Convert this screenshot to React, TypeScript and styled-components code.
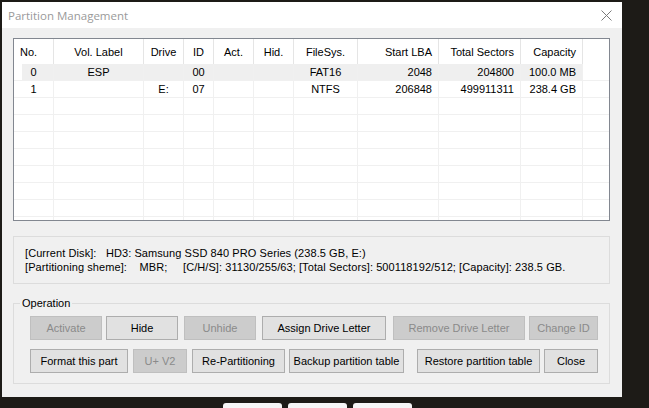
import { createGlobalStyle, styled } from "styled-components"

const GlobalStyle = createGlobalStyle`
  html, body {
    margin: 0;
    padding: 0;
    background: #1d1b17;
    overflow: hidden;
  }
  body {
    font-family: "Liberation Sans", Arial, sans-serif;
    font-size: 11px;
    color: #000;
  }
`

interface Column {
  title: string
  width: number
  head: "left" | "center" | "right"
  body: "left" | "center" | "right"
}

const columns: Column[] = [
  { title: "No.", width: 40, head: "left", body: "center" },
  { title: "Vol. Label", width: 90, head: "center", body: "center" },
  { title: "Drive", width: 40, head: "center", body: "center" },
  { title: "ID", width: 30, head: "center", body: "center" },
  { title: "Act.", width: 40, head: "center", body: "center" },
  { title: "Hid.", width: 40, head: "center", body: "center" },
  { title: "FileSys.", width: 64, head: "center", body: "center" },
  { title: "Start LBA", width: 81, head: "right", body: "right" },
  { title: "Total Sectors", width: 82, head: "right", body: "right" },
  { title: "Capacity", width: 62, head: "right", body: "right" },
]

const partitions = [
  ["0", "ESP", "", "00", "", "", "FAT16", "2048", "204800", "100.0 MB"],
  ["1", "", "E:", "07", "", "", "NTFS", "206848", "499911311", "238.4 GB"],
]

const gridTemplate = columns.map(c => `${c.width}px`).join(" ") + " 1fr"

interface ButtonDef {
  label: string
  w: number
  ml: number
  disabled?: boolean
}

const rowOne: ButtonDef[] = [
  { label: "Activate", w: 72, ml: 0, disabled: true },
  { label: "Hide", w: 72, ml: 4 },
  { label: "Unhide", w: 72, ml: 6, disabled: true },
  { label: "Assign Drive Letter", w: 124, ml: 6 },
  { label: "Remove Drive Letter", w: 132, ml: 7, disabled: true },
  { label: "Change ID", w: 69, ml: 4, disabled: true },
]

const rowTwo: ButtonDef[] = [
  { label: "Format this part", w: 98, ml: 0 },
  { label: "U+ V2", w: 54, ml: 5, disabled: true },
  { label: "Re-Partitioning", w: 93, ml: 5 },
  { label: "Backup partition table", w: 115, ml: 4 },
  { label: "Restore partition table", w: 123, ml: 13 },
  { label: "Close", w: 54, ml: 4 },
]

export default function App() {
  const emptyRows = Array.from({ length: 8 })

  return (
    <>
      <GlobalStyle />
      <Desktop>
        <Window>
          <TitleBar>
            <Title>Partition Management</Title>
            <CloseIcon width="11" height="11" viewBox="0 0 11 11">
              <path d="M0.5 0.5 L10.5 10.5 M10.5 0.5 L0.5 10.5" stroke="#7a7a7a" strokeWidth="1" fill="none" />
            </CloseIcon>
          </TitleBar>

          <Content>
            <ListBox>
              <HeaderRow>
                {columns.map(c => (
                  <HeaderCell key={c.title} $align={c.head}>{c.title}</HeaderCell>
                ))}
                <HeaderCell $align="left" $last />
              </HeaderRow>

              {partitions.map((p, i) => (
                <Row key={i} $selected={i === 0}>
                  {p.map((value, j) => (
                    <Cell key={j} $align={columns[j].body}>{value}</Cell>
                  ))}
                  <Cell $align="left" $last />
                </Row>
              ))}

              {emptyRows.map((_, i) => (
                <Row key={`e${i}`}>
                  {columns.map(c => <Cell key={c.title} $align="left" />)}
                  <Cell $align="left" $last />
                </Row>
              ))}
            </ListBox>

            <InfoBox>
              <InfoLine>[Current Disk]:   HD3: Samsung SSD 840 PRO Series (238.5 GB, E:)</InfoLine>
              <InfoLine>[Partitioning sheme]:    MBR;     [C/H/S]: 31130/255/63; [Total Sectors]: 500118192/512; [Capacity]: 238.5 GB.</InfoLine>
            </InfoBox>

            <OperationGroup>
              <Legend>Operation</Legend>
              <ButtonRow>
                {rowOne.map(b => (
                  <Button key={b.label} $w={b.w} $ml={b.ml} disabled={b.disabled}>{b.label}</Button>
                ))}
              </ButtonRow>
              <ButtonRow>
                {rowTwo.map(b => (
                  <Button key={b.label} $w={b.w} $ml={b.ml} disabled={b.disabled}>{b.label}</Button>
                ))}
              </ButtonRow>
            </OperationGroup>
          </Content>
        </Window>

        <TabStrip>
          <Tab />
          <Tab />
          <Tab />
        </TabStrip>
      </Desktop>
    </>
  )
}

const Desktop = styled.div`
  width: 649px;
  height: 408px;
  padding: 2px 0 0 2px;
  box-sizing: border-box;
  display: flex;
  flex-direction: column;
  overflow: hidden;
`

const Window = styled.div`
  flex-shrink: 0;
  width: 620px;
  height: 395px;
  background: #f0f0f0;
  display: flex;
  flex-direction: column;
`

const TitleBar = styled.div`
  height: 26px;
  background: #ffffff;
  display: flex;
  align-items: center;
  justify-content: space-between;
  padding: 0 10px 0 6px;
`

const Title = styled.span`
  font-family: "Open Sans", "Noto Sans", sans-serif;
  font-size: 11.5px;
  color: #9a9a9a;
  margin-top: 1px;
`

const CloseIcon = styled.svg`
  display: block;
  margin-top: 1px;
`

const Content = styled.div`
  padding: 10px 12px 0 11px;
  display: flex;
  flex-direction: column;
`

const ListBox = styled.div`
  height: 181px;
  border: 1px solid #828790;
  background: #ffffff;
  overflow: hidden;
`

const HeaderRow = styled.div`
  display: grid;
  grid-template-columns: ${gridTemplate};
  height: 25px;
`

const HeaderCell = styled.div<{ $align: string; $last?: boolean }>`
  box-sizing: border-box;
  border-right: ${p => (p.$last ? "none" : "1px solid #e5e5e5")};
  display: flex;
  align-items: center;
  justify-content: ${p => (p.$align === "left" ? "flex-start" : p.$align === "right" ? "flex-end" : "center")};
  padding: ${p => (p.$align === "left" ? "1px 0 0 6px" : p.$align === "right" ? "1px 6px 0 0" : "1px 0 0 0")};
  white-space: nowrap;
`

const Row = styled.div<{ $selected?: boolean }>`
  display: grid;
  grid-template-columns: ${gridTemplate};
  height: 17px;

  & > div:not(:last-child) {
    background: ${p => (p.$selected ? "#efefef" : "transparent")};
  }

  & > div:first-child {
    background: ${p => (p.$selected ? "linear-gradient(to right, #ffffff 8px, #efefef 8px)" : "transparent")};
  }
`

const Cell = styled.div<{ $align: string; $last?: boolean }>`
  box-sizing: border-box;
  border-right: ${p => (p.$last ? "none" : "1px solid #f0f0f0")};
  border-bottom: 1px solid #f0f0f0;
  display: flex;
  align-items: center;
  justify-content: ${p => (p.$align === "left" ? "flex-start" : p.$align === "right" ? "flex-end" : "center")};
  padding: ${p => (p.$align === "right" ? "0 6px 0 0" : "0")};
  white-space: nowrap;
`

const InfoBox = styled.div`
  margin-top: 15px;
  border: 1px solid #dcdcdc;
  padding: 9px 0 0 11px;
  height: 37px;
`

const InfoLine = styled.div`
  line-height: 14px;
  white-space: pre;
  letter-spacing: 0.08px;
`

const OperationGroup = styled.fieldset`
  margin: 12px 0 0 0;
  padding: 6px 0 10px 16px;
  border: 1px solid #dcdcdc;
  min-width: 0;
`

const Legend = styled.legend`
  padding: 0 2px;
  margin-left: -10px;
  line-height: 14px;
`

const ButtonRow = styled.div`
  display: flex;
  & + & {
    margin-top: 9px;
  }
`

const Button = styled.button<{ $w: number; $ml: number }>`
  width: ${p => p.$w}px;
  height: 24px;
  margin: 0 0 0 ${p => p.$ml}px;
  padding: 0;
  font-family: "Liberation Sans", Arial, sans-serif;
  font-size: 11px;
  color: #000;
  background: #e1e1e1;
  border: 1px solid #adadad;
  border-radius: 0;

  &:disabled {
    background: #cccccc;
    border-color: #bfbfbf;
    color: #8a8a8a;
  }
`

const TabStrip = styled.div`
  flex-shrink: 0;
  display: flex;
  gap: 6px;
  margin: 6px 0 0 221px;
`

const Tab = styled.div`
  width: 59px;
  height: 12px;
  background: #f6f6f6;
  border-radius: 3px 3px 0 0;
`
